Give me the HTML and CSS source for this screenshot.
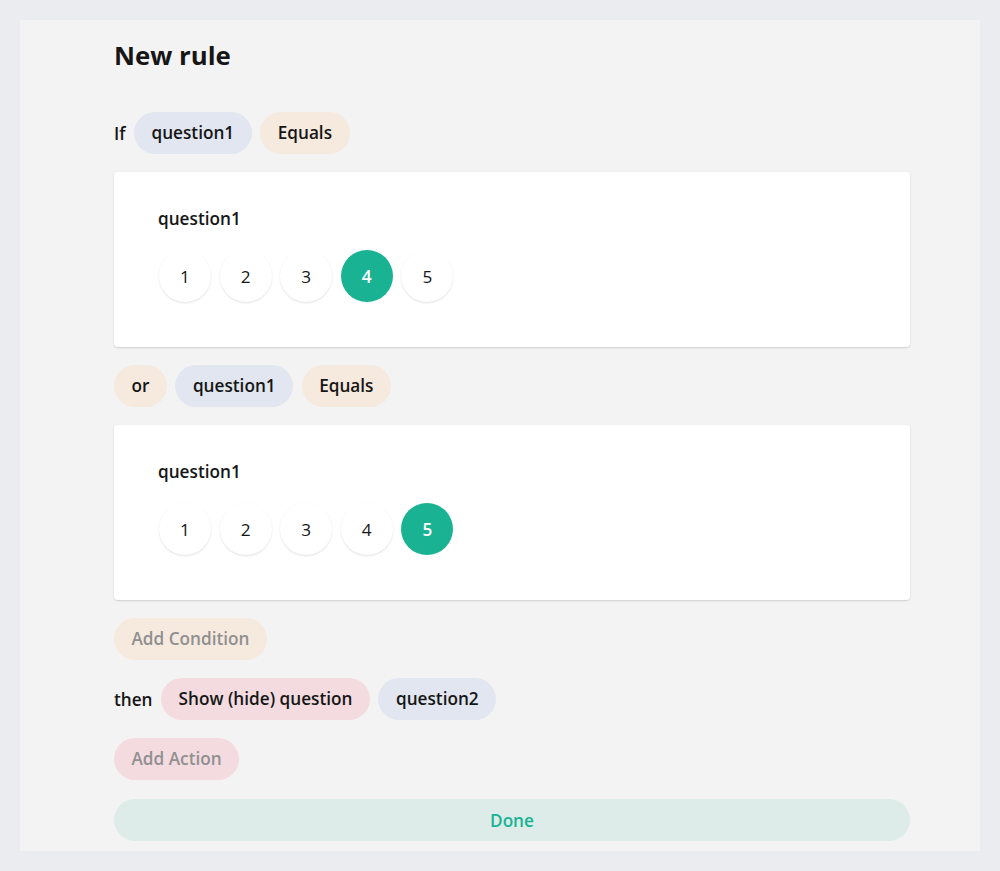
FILE: index.html
```html
<!DOCTYPE html>
<html lang="en">
<head>
  <meta charset="UTF-8">
  <meta name="viewport" content="width=device-width, initial-scale=1.0">
  <title>New rule</title>
  <link rel="stylesheet" href="styles.css">
</head>
<body>

  <div class="panel">
    <h1 class="title">New rule</h1>

    <div class="rule">
      <!-- first condition -->
      <div class="row">
        <span class="label">If</span>
        <span class="pill pill-blue">question1</span>
        <span class="pill pill-orange">Equals</span>
      </div>

      <div class="card">
        <div class="card-title">question1</div>
        <div class="rating">
          <span class="rate">1</span>
          <span class="rate">2</span>
          <span class="rate">3</span>
          <span class="rate selected">4</span>
          <span class="rate">5</span>
        </div>
      </div>

      <!-- second condition -->
      <div class="row">
        <span class="pill pill-orange">or</span>
        <span class="pill pill-blue">question1</span>
        <span class="pill pill-orange">Equals</span>
      </div>

      <div class="card">
        <div class="card-title">question1</div>
        <div class="rating">
          <span class="rate">1</span>
          <span class="rate">2</span>
          <span class="rate">3</span>
          <span class="rate">4</span>
          <span class="rate selected">5</span>
        </div>
      </div>

      <div class="row">
        <span class="pill pill-orange muted">Add Condition</span>
      </div>

      <!-- actions -->
      <div class="row">
        <span class="label">then</span>
        <span class="pill pill-pink">Show (hide) question</span>
        <span class="pill pill-blue">question2</span>
      </div>

      <div class="row">
        <span class="pill pill-pink muted">Add Action</span>
      </div>

      <button class="done-button">Done</button>
    </div>
  </div>

</body>
</html>
```

FILE: styles.css
```css
/* General Styles */
* {
  box-sizing: border-box;
  margin: 0;
  padding: 0;
}

body {
  font-family: "Open Sans", Arial, sans-serif;
  background-color: #ebecf0;
  color: #161616;
  padding: 20px;
}

/* Panel */
.panel {
  background-color: #f3f3f3;
  height: 831px;
  padding: 19px 70px 0 94px;
}

.title {
  font-size: 25.8px;
  font-weight: 700;
  line-height: 32px;
  margin-bottom: 41px;
}

.rule {
  display: flex;
  flex-direction: column;
  gap: 18px;
}

/* Rows of pills */
.row {
  display: flex;
  align-items: center;
  gap: 8.5px;
}

.label {
  font-size: 17.2px;
  font-weight: 600;
}

.pill {
  display: inline-flex;
  align-items: center;
  height: 42px;
  padding: 0 17.5px;
  border-radius: 21px;
  font-size: 17.2px;
  font-weight: 600;
  line-height: 24px;
}

.pill-blue {
  background-color: #e1e6f0;
}

.pill-orange {
  background-color: #f6e9de;
}

.pill-pink {
  background-color: #f3dbe0;
}

.muted {
  color: #909090;
}

/* Question cards */
.card {
  background-color: #fff;
  border-radius: 4px;
  box-shadow: 0 1px 2px rgba(0, 0, 0, 0.15);
  height: 175px;
  padding: 35px 44px 0 44px;
}

.card-title {
  font-size: 17.2px;
  font-weight: 600;
  line-height: 24px;
  margin-bottom: 19px;
}

.rating {
  display: flex;
  gap: 8.6px;
  padding-left: 1px;
}

.rate {
  width: 52px;
  height: 52px;
  border-radius: 50%;
  display: flex;
  align-items: center;
  justify-content: center;
  font-size: 17.2px;
  background-color: #fff;
  box-shadow: 0 1px 2px rgba(0, 0, 0, 0.12);
}

.rate.selected {
  background-color: #19b394;
  color: #fff;
  font-weight: 600;
  box-shadow: none;
}

/* Done button */
.done-button {
  margin-top: 1px;
  height: 42px;
  border: none;
  border-radius: 21px;
  background-color: #ddece8;
  color: #19b394;
  font-family: "Open Sans", Arial, sans-serif;
  font-size: 17.2px;
  font-weight: 600;
  cursor: pointer;
}
```
